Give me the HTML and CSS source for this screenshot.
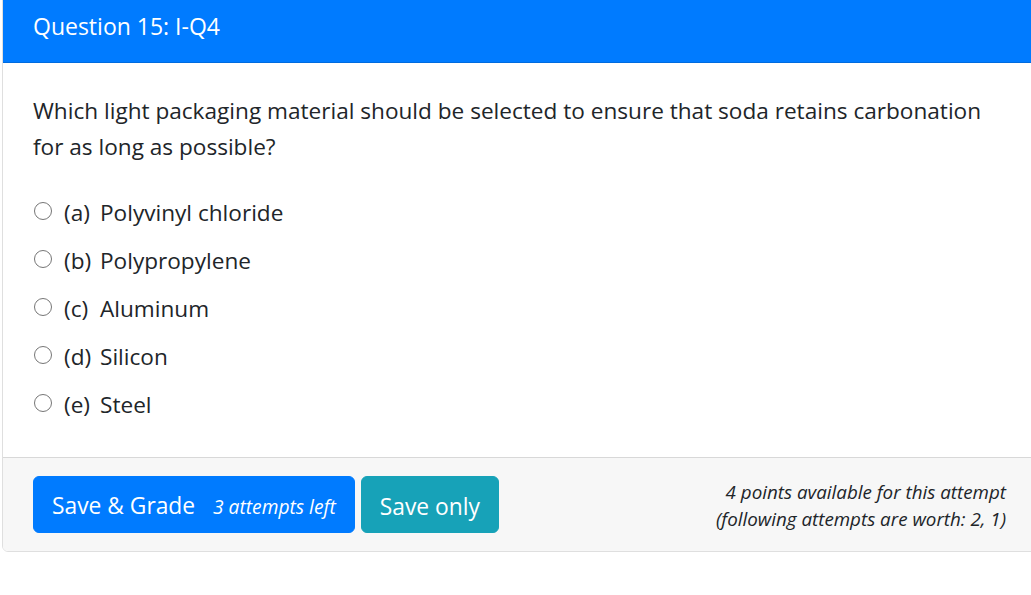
FILE: index.html
```html
<!DOCTYPE html>
<html lang="en">
<head>
<meta charset="utf-8">
<title>Question 15: I-Q4</title>
<link rel="stylesheet" href="styles.css">
</head>
<body>
<div class="card">
  <div class="card-header">Question 15: I-Q4</div>
  <div class="card-body">
    <p class="question">Which light packaging material should be selected to ensure that soda retains carbonation for as long as possible?</p>
    <div class="options">
      <label class="opt"><input type="radio" name="q"><span class="key">(a)</span><span>Polyvinyl chloride</span></label>
      <label class="opt"><input type="radio" name="q"><span class="key">(b)</span><span>Polypropylene</span></label>
      <label class="opt"><input type="radio" name="q"><span class="key">(c)</span><span>Aluminum</span></label>
      <label class="opt"><input type="radio" name="q"><span class="key">(d)</span><span>Silicon</span></label>
      <label class="opt"><input type="radio" name="q"><span class="key">(e)</span><span>Steel</span></label>
    </div>
  </div>
  <div class="card-footer">
    <div class="buttons">
      <button class="btn btn-primary">Save &amp; Grade <small class="attempts">3 attempts left</small></button>
      <button class="btn btn-info">Save only</button>
    </div>
    <div class="points">
      <div>4 points available for this attempt</div>
      <div>(following attempts are worth: 2, 1)</div>
    </div>
  </div>
</div>
</body>
</html>
```

FILE: styles.css
```css
html, body {
  margin: 0;
  padding: 0;
  overflow: hidden;
  background: #fff;
}
body {
  font-family: "Open Sans", "Noto Sans", sans-serif;
  font-size: 22.6px;
  line-height: 36px;
  color: #212529;
}
.card {
  margin-left: 2px;
  margin-top: -11px;
  width: 1035px;
  border: 1.5px solid rgba(0, 0, 0, 0.125);
  border-radius: 6px;
  overflow: hidden;
  box-sizing: border-box;
}
.card-header {
  background: #007bff;
  color: #fff;
  font-size: 23px;
  padding: 18px 30px;
  border-bottom: 1.5px solid rgba(0, 0, 0, 0.125);
}
.card-body {
  padding: 30px 30px 28px;
}
.question {
  margin: 0 0 24px;
}
.options {
  display: flex;
  flex-direction: column;
}
.opt {
  display: flex;
  align-items: center;
  height: 48px;
}
.opt input {
  appearance: none;
  -webkit-appearance: none;
  width: 18px;
  height: 18px;
  margin: 0 12px 0 1px;
  border: 1px solid #767676;
  border-radius: 50%;
  background: #fff;
  box-sizing: border-box;
  position: relative;
  top: -2px;
}
.key {
  width: 36px;
}
.card-footer {
  background: #f7f7f7;
  border-top: 1.5px solid rgba(0, 0, 0, 0.125);
  padding: 18px 30px;
  display: flex;
  justify-content: space-between;
  align-items: center;
}
.buttons {
  display: flex;
  gap: 6px;
}
.btn {
  font-family: inherit;
  font-size: 22.8px;
  line-height: 36px;
  padding: 11px 18px 7px;
  border: 1.5px solid transparent;
  border-radius: 6px;
  color: #fff;
  cursor: pointer;
}
.btn-primary {
  background: #007bff;
  border-color: #007bff;
}
.btn-info {
  background: #17a2b8;
  border-color: #17a2b8;
}
.attempts {
  font-style: italic;
  font-size: 19.2px;
  margin-left: 12px;
}
.points {
  font-style: italic;
  font-size: 18.8px;
  line-height: 27px;
  text-align: right;
  padding-top: 3px;
}
```
